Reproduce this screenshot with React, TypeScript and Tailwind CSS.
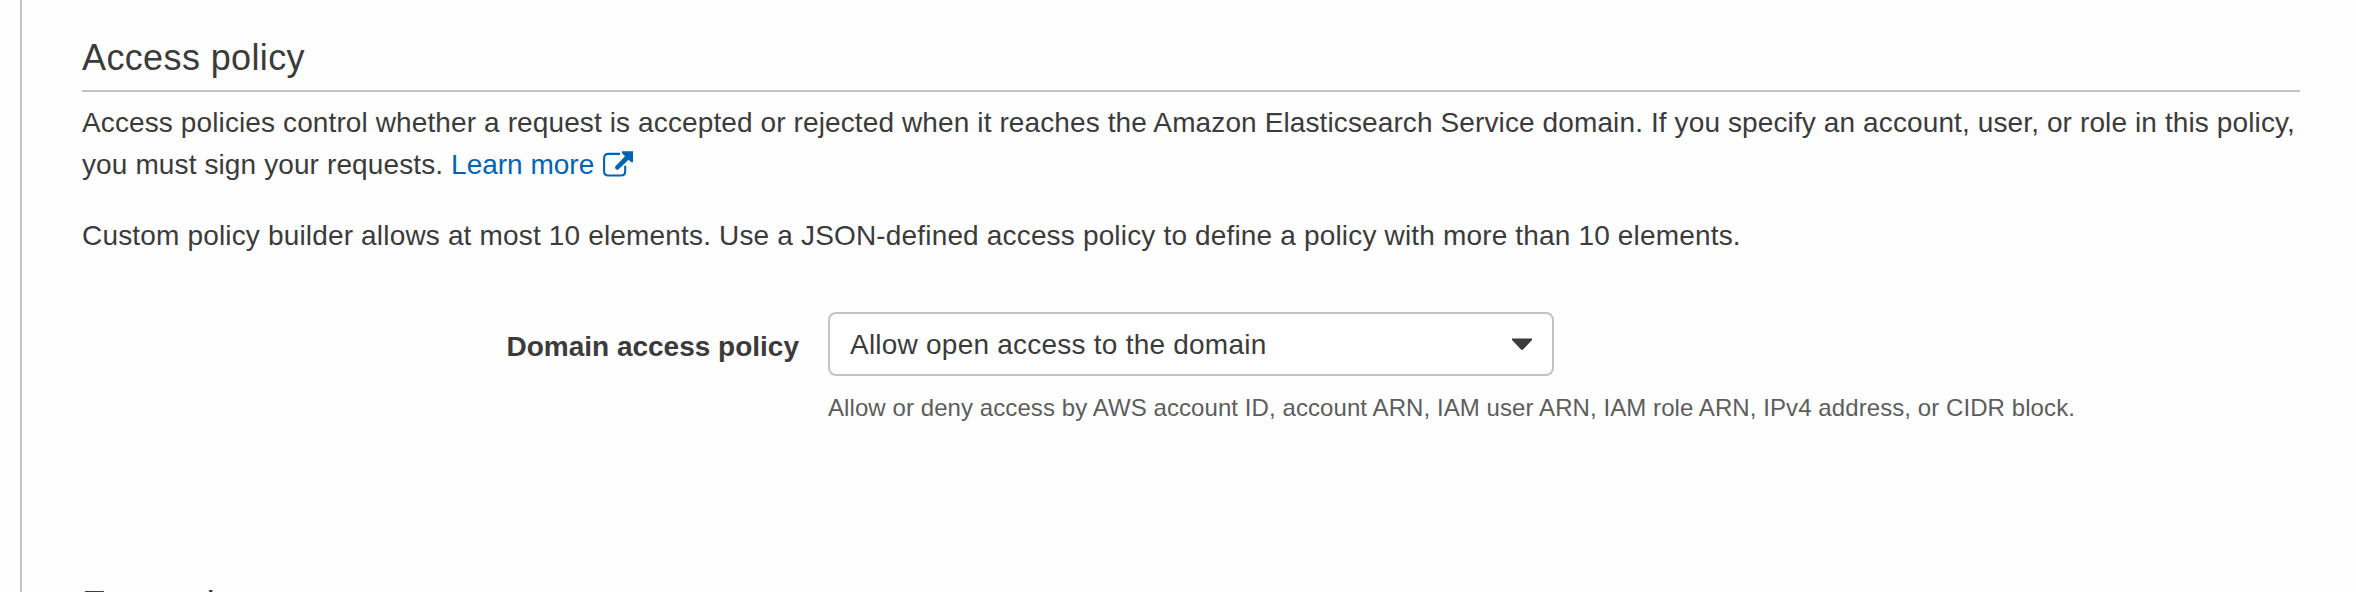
function ExternalLinkIcon() {
  return (
    <svg className="ml-[9px] inline-block h-[26px] w-[30px] align-[-3px]" viewBox="0 0 30 26" fill="none">
      <path
        d="M17 2.9H5.4Q1.1 2.9 1.1 7.2V20.2Q1.1 24.5 5.4 24.5H17.9Q22.2 24.5 22.2 20.2V14.8"
        stroke="currentColor"
        strokeWidth="2.1"
      />
      <path
        d="M19 0.3H30V11.3H28.3L25.5 8.8L15.4 18.4Q14 19.2 12.6 18Q11.6 16.6 12.4 15.3L22 5.2L19 2.2Z"
        fill="currentColor"
      />
    </svg>
  );
}

function PolicySelect() {
  return (
    <button
      type="button"
      className="flex h-[64px] w-[726px] items-center justify-between rounded-lg border-2 border-[#c3c3c3] bg-white pl-5 pr-5 text-left tracking-[0.23px]"
    >
      <span className="pt-0.5">Allow open access to the domain</span>
      <svg className="h-3 w-5" viewBox="0 0 20 12">
        <path d="M0 0.6H20V2L11 11.6Q10 12.3 9 11.6L0 2Z" fill="#3b3b3b" />
      </svg>
    </button>
  );
}

export default function App() {
  return (
    <div className="h-[592px] overflow-hidden bg-[#fefefe] pl-5 font-['Liberation_Sans',Arial,sans-serif] text-[28px] leading-[42px] text-[#3b3b3b]">
      <main className="h-full border-l-2 border-[#c3c3c3] pl-[60px] pr-14 pt-[37px]">
        <section className="h-[547px]">
          <h2 className="h-[55px] border-b-2 border-[#c3c3c3] text-[36px] tracking-[0.37px]">Access policy</h2>
          <p className="mt-[10px] tracking-[0.115px]">
            Access policies control whether a request is accepted or rejected when it reaches the Amazon Elasticsearch
            Service domain. If you specify an account, user, or role in this policy,
            <br />
            you must sign your requests.{" "}
            <a href="#" className="whitespace-nowrap tracking-normal text-[#0063b3]">
              <span>Learn more</span>
              <ExternalLinkIcon />
            </a>
          </p>
          <p className="mt-[29px] tracking-[0.167px]">
            Custom policy builder allows at most 10 elements. Use a JSON-defined access policy to define a policy with
            more than 10 elements.
          </p>
          <div className="mt-[55px] flex">
            <div className="w-[717px] pt-[14px] text-right font-bold">Domain access policy</div>
            <div className="ml-[29px]">
              <PolicySelect />
              <p className="mt-[14px] whitespace-nowrap text-[24px] leading-9 tracking-[0.08px] text-[#5d5d5d]">
                Allow or deny access by AWS account ID, account ARN, IAM user ARN, IAM role ARN, IPv4 address, or CIDR
                block.
              </p>
            </div>
          </div>
        </section>
        <section>
          <h2 className="text-[36px] tracking-[0.37px]">Encryption</h2>
        </section>
      </main>
    </div>
  );
}
